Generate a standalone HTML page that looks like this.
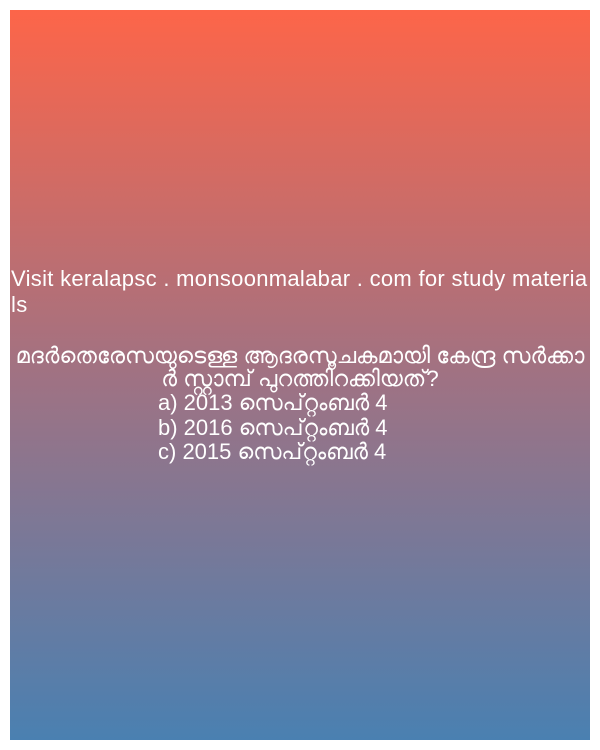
<!DOCTYPE html>
<html><head><meta charset="utf-8"><style>
html,body{margin:0;padding:0;background:#fff;width:600px;height:750px;overflow:hidden}
.box{position:absolute;left:10px;top:10px;width:580px;height:730px;background:linear-gradient(#fd6549,#a07283 50%,#4a80b1);color:#fff;font-family:"Liberation Sans","Noto Sans CJK JP",sans-serif;font-size:22px}
.v{position:absolute;left:1px;top:256px;width:578px;line-height:26px;word-break:break-all;letter-spacing:0.3px}
.q{position:absolute;left:0;top:334px;width:580px;text-align:center;line-height:23px;font-size:22.5px}
.o{position:absolute;left:148px;line-height:24.5px;text-align:left}
</style></head><body><div class="box">
<div class="v">Visit keralapsc . monsoonmalabar . com for study materials</div>
<div class="q">മദർതെരേസയുടെള്ള ആദരസൂചകമായി കേന്ദ്ര സർക്കാ<br>ർ സ്റ്റാമ്പ് പുറത്തിറക്കിയത്?</div>
<div class="o" style="top:381px">a) 2013 സെപ്റ്റംബർ 4<br>b) 2016 സെപ്റ്റംബർ 4<br>c) 2015 സെപ്റ്റംബർ 4</div>
</div></body></html>
